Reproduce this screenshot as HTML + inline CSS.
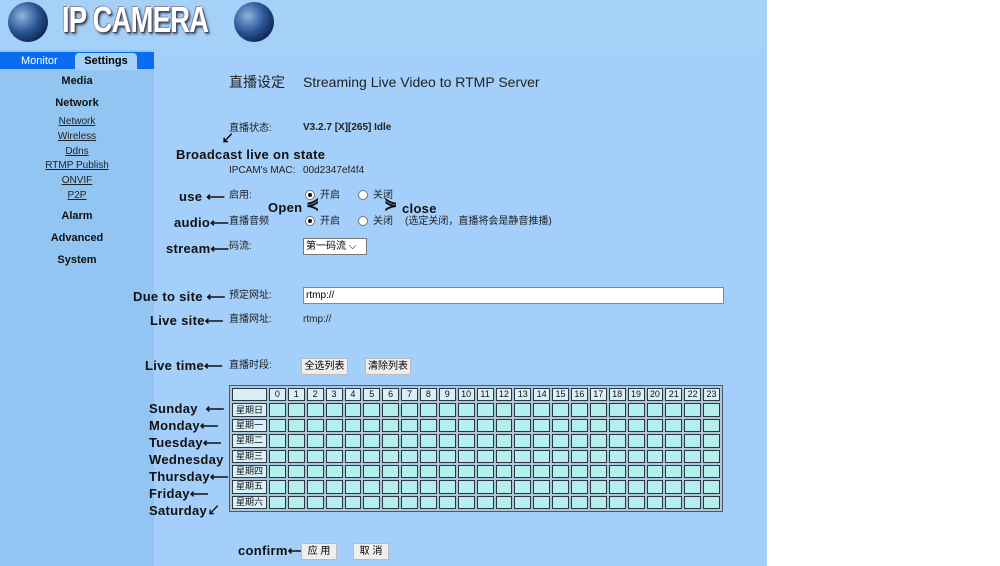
<!DOCTYPE html><html><head><meta charset="utf-8"><style>
body{margin:0;width:1000px;height:566px;position:relative;background:#fff;font-family:"Liberation Sans","Noto Sans CJK SC",sans-serif;overflow:hidden}
.a{position:absolute;white-space:nowrap;line-height:1.15}
#hd{left:0;top:0;width:767px;height:50px;background:#a5d0f8}
#sb{left:0;top:50px;width:154px;height:516px;background:#93c5f3}
#mn{left:154px;top:50px;width:613px;height:516px;background:#a3cffa}
.globe{width:40px;height:40px;border-radius:50%;background:radial-gradient(circle at 35% 35%,#8fb4e0,#2a5596 45%,#0c2048 80%);}
.nav{font-size:11px;font-weight:bold;color:#111;text-align:center;width:154px;left:0}
.lk{font-size:10px;color:#222;text-decoration:underline;text-align:center;width:154px;left:0}
.lb{font-size:10px;color:#222;line-height:12px}
.an{font-size:13px;font-weight:bold;color:#111;letter-spacing:.3px;line-height:15px}
.btn{background:#eee;border:1px solid #bbb;font-size:10px;text-align:center;height:15px;line-height:15px}
.rd{width:8px;height:8px;border:1px solid #777;border-radius:50%;background:#fff}
.rd.on::after{content:"";position:absolute;left:2px;top:2px;width:4px;height:4px;border-radius:50%;background:#111}
table{position:absolute;left:229px;top:385px;width:494px;height:127px;border:1px solid #556;background:#a8c8dc;border-spacing:2px;padding:0;table-layout:fixed}
td{border:1px solid #334;background:#b3f0ec;padding:0;font-size:9px;line-height:11px;height:11px;text-align:center;color:#111;overflow:hidden;white-space:nowrap}
tr:first-child td{background:#d8f0f8}
td.d{background:#d8f0f8;width:32px}
</style></head><body>
<div class="a" id="hd"></div><div class="a" id="sb"></div><div class="a" id="mn"></div>
<div class="a globe" style="left:8px;top:2px"></div>
<div class="a" style="left:62px;top:0px;font-size:36px;line-height:40px;font-weight:bold;color:#fff;transform:scale(.76,1);transform-origin:left top;letter-spacing:-1px;text-shadow:1px 1px 0 #445,-1px -1px 0 #889,2px 2px 3px #334">IP CAMERA</div>
<div class="a globe" style="left:234px;top:2px"></div>
<div class="a" style="left:0;top:52px;width:154px;height:17px;background:#0a6cf0"></div>
<div class="a" style="left:21px;top:55px;font-size:11px;color:#fff">Monitor</div>
<div class="a" style="left:75px;top:53px;width:62px;height:17px;background:#a5d0f8;border-radius:4px 4px 0 0;font-size:11px;font-weight:bold;text-align:center;line-height:17px">Settings</div>
<div class="a nav" style="top:75px">Media</div>
<div class="a nav" style="top:97px">Network</div>
<div class="a lk" style="top:116px">Network</div>
<div class="a lk" style="top:131px">Wireless</div>
<div class="a lk" style="top:146px">Ddns</div>
<div class="a lk" style="top:160px">RTMP Publish</div>
<div class="a lk" style="top:175px">ONVIF</div>
<div class="a lk" style="top:190px">P2P</div>
<div class="a nav" style="top:210px">Alarm</div>
<div class="a nav" style="top:232px">Advanced</div>
<div class="a nav" style="top:254px">System</div>
<div class="a" style="left:229px;top:74px;font-size:14px;color:#222;line-height:17px">直播设定</div>
<div class="a" style="left:303px;top:74px;font-size:14px;color:#222;line-height:17px">Streaming Live Video to RTMP Server</div>
<div class="a lb" style="left:229px;top:123px">直播状态:</div>
<div class="a lb" style="left:303px;top:122px;font-weight:bold">V3.2.7 [X][265] Idle</div>
<div class="a an" style="left:176px;top:147px">Broadcast live on state</div>
<div class="a" style="left:221px;top:131px;font-size:13px;font-weight:bold;line-height:15px">↙</div>
<div class="a lb" style="left:229px;top:165px">IPCAM's MAC:</div>
<div class="a lb" style="left:303px;top:165px">00d2347ef4f4</div>
<div class="a an" style="left:179px;top:189px">use ⟵</div>
<div class="a lb" style="left:229px;top:190px">启用:</div>
<div class="a rd on" style="left:305px;top:190px"></div><div class="a lb" style="left:320px;top:190px">开启</div>
<div class="a rd" style="left:358px;top:190px"></div><div class="a lb" style="left:373px;top:190px">关闭</div>
<div class="a an" style="left:268px;top:200px">Open</div>
<div class="a an" style="left:306px;top:197px;font-size:16px">⋞</div>
<div class="a an" style="left:384px;top:197px;font-size:16px">⋟</div>
<div class="a an" style="left:402px;top:201px">close</div>
<div class="a an" style="left:174px;top:215px">audio⟵</div>
<div class="a lb" style="left:229px;top:216px">直播音频</div>
<div class="a rd on" style="left:305px;top:216px"></div><div class="a lb" style="left:320px;top:216px">开启</div>
<div class="a rd" style="left:358px;top:216px"></div><div class="a lb" style="left:373px;top:216px">关闭</div>
<div class="a lb" style="left:405px;top:216px">(选定关闭，直播将会是静音推播)</div>
<div class="a an" style="left:166px;top:241px">stream⟵</div>
<div class="a lb" style="left:229px;top:241px">码流:</div>
<div class="a" style="left:303px;top:238px;width:60px;height:15px;background:#fff;border:1px solid #777;font-size:10px;line-height:15px;padding-left:2px">第一码流 ⌵</div>
<div class="a an" style="left:133px;top:289px">Due to site ⟵</div>
<div class="a lb" style="left:229px;top:290px">预定网址:</div>
<div class="a" style="left:303px;top:287px;width:417px;height:15px;background:#fff;border:1px solid #888;font-size:10px;line-height:15px;padding-left:2px">rtmp://</div>
<div class="a an" style="left:150px;top:313px">Live site⟵</div>
<div class="a lb" style="left:229px;top:314px">直播网址:</div>
<div class="a lb" style="left:303px;top:314px">rtmp://</div>
<div class="a an" style="left:145px;top:358px">Live time⟵</div>
<div class="a lb" style="left:229px;top:360px">直播时段:</div>
<div class="a btn" style="left:301px;top:358px;width:45px">全选列表</div>
<div class="a btn" style="left:365px;top:358px;width:44px">清除列表</div>
<div class="a an" style="left:149px;top:401px">Sunday &nbsp;⟵</div>
<div class="a an" style="left:149px;top:418px">Monday⟵</div>
<div class="a an" style="left:149px;top:435px">Tuesday⟵</div>
<div class="a an" style="left:149px;top:452px">Wednesday</div>
<div class="a an" style="left:149px;top:469px">Thursday⟵</div>
<div class="a an" style="left:149px;top:486px">Friday⟵</div>
<div class="a an" style="left:149px;top:503px">Saturday↙</div>
<table id="t"></table>
<div class="a an" style="left:238px;top:543px">confirm⟵</div>
<div class="a btn" style="left:301px;top:543px;width:34px">应 用</div>
<div class="a btn" style="left:353px;top:543px;width:34px">取 消</div>
<script>
var h='<colgroup><col style="width:35px">';for(var i=0;i<24;i++)h+='<col>';h+='</colgroup><tr><td class="d"></td>';for(var i=0;i<24;i++)h+='<td>'+i+'</td>';h+='</tr>';
['日','一','二','三','四','五','六'].forEach(function(d){h+='<tr><td class="d">星期'+d+'</td>';for(var i=0;i<24;i++)h+='<td></td>';h+='</tr>';});
document.getElementById('t').innerHTML=h;
</script>
</body></html>
